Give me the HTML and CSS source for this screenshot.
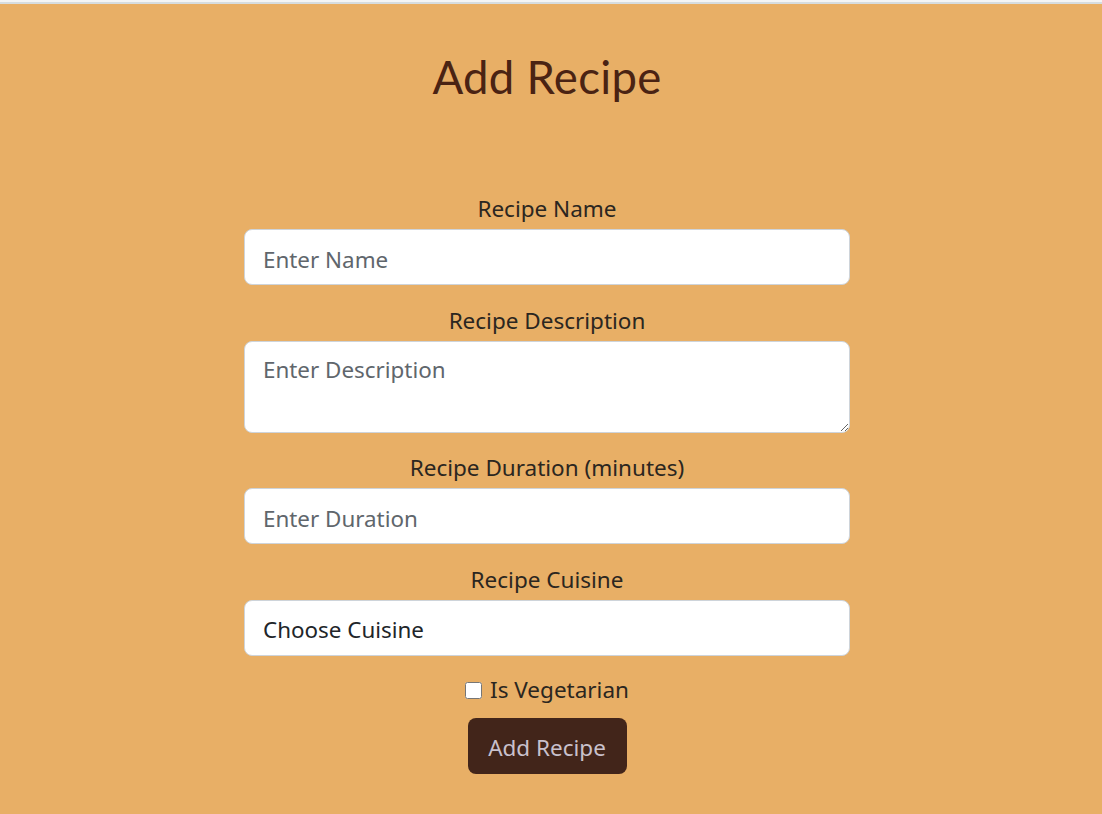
FILE: index.html
```html
<!DOCTYPE html>
<html lang="en">
<head>
<meta charset="utf-8">
<title>Add Recipe</title>
<link rel="stylesheet" href="styles.css">
</head>
<body>
<div class="topbar"></div>
<main class="page">
  <h1 class="title">Add Recipe</h1>
  <form class="recipe-form">
    <div class="group">
      <label class="label" for="name">Recipe Name</label>
      <input class="control" id="name" type="text" placeholder="Enter Name">
    </div>
    <div class="group">
      <label class="label" for="desc">Recipe Description</label>
      <textarea class="control area" id="desc" placeholder="Enter Description"></textarea>
    </div>
    <div class="group">
      <label class="label" for="dur">Recipe Duration (minutes)</label>
      <input class="control" id="dur" type="text" placeholder="Enter Duration">
    </div>
    <div class="group">
      <label class="label" for="cuisine">Recipe Cuisine</label>
      <div class="control select" id="cuisine">Choose Cuisine</div>
    </div>
    <div class="check-row">
      <input class="check" type="checkbox" id="veg">
      <label class="check-label" for="veg">Is Vegetarian</label>
    </div>
    <button class="btn" type="button">Add Recipe</button>
  </form>
</main>
</body>
</html>
```

FILE: styles.css
```css
html, body {
  margin: 0;
  padding: 0;
}
body {
  background: #e8af66;
  font-family: "Noto Sans", "Open Sans", sans-serif;
  color: #2b2620;
  height: 814px;
  overflow: hidden;
}
.topbar {
  height: 2px;
  background: #f3f5f6;
  border-bottom: 2px solid #d6dde0;
}
.page {
  width: 1094px;
  display: flex;
  flex-direction: column;
  align-items: center;
}
.title {
  margin: 45px 0 0;
  height: 56px;
  font-family: "Lato", sans-serif;
  font-weight: 400;
  font-size: 45.5px;
  line-height: 56px;
  color: #4a2313;
  letter-spacing: 0.3px;
}
.recipe-form {
  margin-top: 89px;
  width: 606px;
  display: flex;
  flex-direction: column;
  align-items: center;
}
.group {
  width: 100%;
  display: flex;
  flex-direction: column;
  align-items: center;
  margin-bottom: 20.5px;
}
.label {
  font-size: 22.5px;
  line-height: 30px;
  margin-bottom: 5px;
  color: #2b2620;
}
.control {
  box-sizing: border-box;
  width: 100%;
  height: 56px;
  border: 1px solid #ced4da;
  border-radius: 8px;
  background: #fff;
  padding: 4px 18px 0;
  font-family: "Noto Sans", "Open Sans", sans-serif;
  font-size: 22.4px;
  color: #212529;
  outline: none;
  display: block;
}
.control::placeholder {
  color: #60666c;
}
.area {
  height: 92px;
  padding-top: 13px;
  resize: vertical;
  line-height: 30px;
}
.select {
  display: flex;
  align-items: center;
  line-height: 30px;
}
.check-row {
  display: flex;
  align-items: center;
  gap: 8px;
  margin-top: -3px;
  height: 34px;
}
.check {
  width: 17px;
  height: 17px;
  margin: 0;
}
.check-label {
  font-size: 22.5px;
  line-height: 30px;
}
.btn {
  margin-top: 11px;
  width: 159px;
  height: 56px;
  border: none;
  border-radius: 8px;
  background: #42251a;
  color: #c9c1cc;
  font-family: "Noto Sans", "Open Sans", sans-serif;
  font-size: 22.5px;
  padding: 2px 0 0;
}
```
